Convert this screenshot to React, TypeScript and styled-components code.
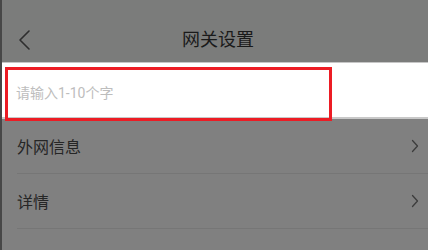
import React from "react";
import styled, { createGlobalStyle } from "styled-components";

const Global = createGlobalStyle`
  html, body { margin: 0; padding: 0; }
  body {
    width: 428px;
    height: 250px;
    overflow: hidden;
    background: #808080;
    font-family: Roboto, "Noto Sans CJK SC", "Noto Sans", sans-serif;
  }
`;

const Page = styled.div`
  width: 428px;
  height: 250px;
  box-sizing: border-box;
  border-left: 2px solid #474747;
  background: #808080;
  display: flex;
  flex-direction: column;
`;

const Header = styled.header`
  height: 63px;
  box-sizing: border-box;
  padding-top: 16px;
  background: #7b7c7b;
  border-bottom: 1px solid #c6c6c6;
  display: flex;
`;

const NavBar = styled.div`
  flex: 1;
  height: 47px;
  display: grid;
  grid-template-columns: 60px 1fr 60px;
  align-items: center;
`;

const BackButton = styled.div`
  display: flex;
  align-items: center;
  padding-left: 15px;
  color: #2e2e2e;
`;

const Title = styled.h1`
  margin: 0;
  text-align: center;
  font-size: 18px;
  font-weight: 400;
  color: #1a1a1a;
  line-height: 24px;
  padding-left: 6px;
`;

const InputSection = styled.div`
  position: relative;
  height: 54px;
  background: #ffffff;
  border-bottom: 2px solid #c8c8c8;
  display: flex;
  align-items: center;
  padding-left: 14px;
`;

const NameInput = styled.input`
  border: none;
  outline: none;
  background: transparent;
  font-family: inherit;
  font-size: 14px;
  width: 300px;
  padding: 0;
  color: #333;
  margin-top: 5px;
  &::placeholder {
    color: #bdbdbd;
  }
`;

const Highlight = styled.div`
  position: absolute;
  left: 3px;
  top: 4px;
  width: 327px;
  height: 54px;
  box-sizing: border-box;
  border: 3px solid #ec1c24;
  pointer-events: none;
`;

const List = styled.div`
  display: flex;
  flex-direction: column;
`;

const Row = styled.div`
  height: 55px;
  box-sizing: border-box;
  margin-left: 15px;
  padding-right: 9px;
  border-bottom: 1px solid #767676;
  display: flex;
  align-items: center;
  justify-content: space-between;
`;

const RowLabel = styled.span`
  font-size: 16px;
  color: #262626;
  line-height: 22px;
  margin-top: 4px;
`;

const Chevron = styled.svg`
  display: block;
  color: #3c3c3c;
`;

const rows = ["外网信息", "详情"];

export default function App() {
  return (
    <>
      <Global />
      <Page>
        <Header>
          <NavBar>
            <BackButton>
              <svg width="14" height="22" viewBox="0 0 14 22" fill="none">
                <path d="M12 2 L3 11 L12 20" stroke="currentColor" strokeWidth="1.6" strokeLinecap="round" strokeLinejoin="round" />
              </svg>
            </BackButton>
            <Title>网关设置</Title>
            <div />
          </NavBar>
        </Header>
        <InputSection>
          <NameInput placeholder="请输入1-10个字" />
          <Highlight />
        </InputSection>
        <List>
          {rows.map((r) => (
            <Row key={r}>
              <RowLabel>{r}</RowLabel>
              <Chevron width="8" height="14" viewBox="0 0 8 14" fill="none">
                <path d="M1.5 1.5 L6.5 7 L1.5 12.5" stroke="currentColor" strokeWidth="1.3" strokeLinecap="round" strokeLinejoin="round" />
              </Chevron>
            </Row>
          ))}
        </List>
      </Page>
    </>
  );
}
